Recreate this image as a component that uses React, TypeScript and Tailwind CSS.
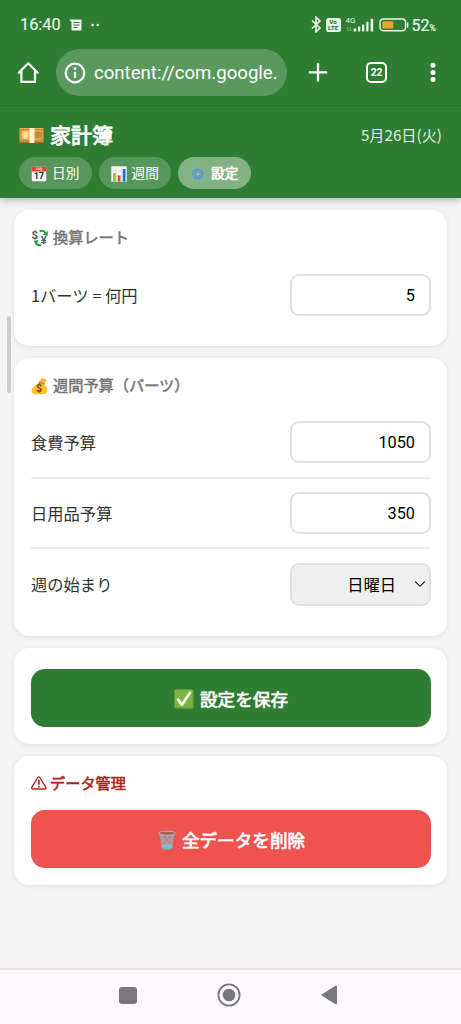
import type { ReactNode } from "react";

const jp = "font-['Noto_Sans_CJK_JP',sans-serif]";

function StatusBar() {
  return (
    <div className="flex h-[49px] items-center pl-[20px] pr-[25px] font-[Roboto,sans-serif] text-[#e9f6e9]">
      <span className="mt-[2px] w-[41px] whitespace-nowrap text-[16.3px] leading-none [-webkit-text-stroke:0.15px]">16:40</span>
      <svg className="ml-[8px]" width="14" height="12" viewBox="0 0 14 12">
        <path d="M0 .5h11.5a1 1 0 0 1 1 1v9a1 1 0 0 1-1 1h-8a1 1 0 0 1-1-1V3Z" fill="currentColor" />
        <path d="M4.5 3.5h6M4.5 6h6M4.5 8.5h4" stroke="#2e7d32" strokeWidth="1" />
      </svg>
      <svg className="ml-[8px]" width="9" height="4" viewBox="0 0 9 4">
        <circle cx="1.5" cy="2" r="1.3" fill="currentColor" />
        <circle cx="6.7" cy="2" r="1.3" fill="currentColor" />
      </svg>

      <div className="ml-auto flex items-center">
        <svg width="11" height="17" viewBox="0 0 11 17" fill="none" stroke="currentColor" strokeWidth="1.6">
          <path d="m1 4.5 8 7.5-4 3.8V1.2l4 3.7L1 12.5" />
        </svg>
        <span className="ml-[4px] flex h-[14px] w-[15px] flex-col items-center justify-center rounded-[2.5px] bg-[#e9f6e9] text-[6.2px] font-black leading-[6px] text-[#2e7d32]">
          <span>Vo</span>
          <span>LTE</span>
        </span>
        <div className="relative ml-[5px] h-[16px] w-[28px]">
          <span className="absolute left-[0px] top-[0px] text-[8px] leading-none">4G</span>
          <svg className="absolute inset-0" width="28" height="16" viewBox="0 0 28 16">
            <g fill="currentColor">
              <rect x="7.6" y="11.4" width="2.8" height="3" rx=".6" />
              <rect x="12" y="9.6" width="2.3" height="4.8" rx=".6" />
              <rect x="16" y="7.6" width="2.3" height="6.8" rx=".6" />
              <rect x="20.2" y="4.8" width="2.3" height="9.6" rx=".6" />
              <rect x="24.6" y="1.8" width="2.6" height="12.6" rx=".6" />
            </g>
            <path d="M1.8 14V10M.5 11.3 1.8 10M4.3 10v4l1.3-1.3" stroke="#8fbd91" strokeWidth=".8" fill="none" />
          </svg>
        </div>
        <svg className="ml-[5px]" width="30" height="14" viewBox="0 0 30 14">
          <rect x="1" y="1" width="25.5" height="11.8" rx="3.2" fill="none" stroke="currentColor" strokeWidth="1.4" />
          <rect x="3.3" y="3.2" width="11" height="7.4" rx="1.2" fill="#e8a72c" />
          <path d="M28.6 5v4" stroke="currentColor" strokeWidth="1.6" strokeLinecap="round" />
        </svg>
        <span className="ml-[3px] mt-[2px] flex items-baseline leading-none [-webkit-text-stroke:0.2px]">
          <span className="text-[16px]">52</span>
          <span className="text-[8.8px]">%</span>
        </span>
      </div>
    </div>
  );
}

function BrowserBar() {
  return (
    <div className="flex h-[57px] items-start border-b border-[#2a732d] font-[Roboto,sans-serif] text-white">
      <svg className="ml-[17px] mt-[12px]" width="22" height="23" viewBox="0 0 22 23" fill="none" stroke="currentColor" strokeWidth="2.2" strokeLinejoin="round" strokeLinecap="round">
        <path d="M1.8 11.8 11.2 2.2l9.4 9.6M4.4 10v10.9H18V10" />
      </svg>
      <div className="ml-[17px] flex h-[47px] w-[231px] items-center rounded-full bg-[#5a985d]">
        <svg className="ml-[8px]" width="22" height="22" viewBox="0 0 22 22">
          <circle cx="11" cy="11" r="9.3" fill="none" stroke="currentColor" strokeWidth="2.2" />
          <path d="M11 9.8v6" stroke="currentColor" strokeWidth="2.3" />
          <circle cx="11" cy="6.6" r="1.4" fill="currentColor" />
        </svg>
        <span className="ml-[8px] mt-[2px] whitespace-nowrap text-[18.6px] leading-none">content://com.google.</span>
      </div>
      <svg className="ml-[21px] mt-[13px]" width="20" height="20" viewBox="0 0 20 20" stroke="currentColor" strokeWidth="2.3">
        <path d="M.8 10.4h18.4M10 1.2v18.4" />
      </svg>
      <span className="ml-[38px] mt-[13px] flex h-[21px] w-[21px] items-center justify-center rounded-[5px] border-2 border-white text-[11.5px] font-bold leading-none">
        <span className="scale-x-90">22</span>
      </span>
      <svg className="ml-[42px] mt-[13px]" width="8" height="21" viewBox="0 0 8 21" fill="currentColor">
        <circle cx="4" cy="3.2" r="2.5" />
        <circle cx="4" cy="10.5" r="2.5" />
        <circle cx="4" cy="17.6" r="2.5" />
      </svg>
    </div>
  );
}

function YenIcon() {
  return (
    <svg width="25" height="17" viewBox="0 0 25 17">
      <rect x=".5" y="1" width="24" height="14" rx="1" fill="#e9b04e" />
      <path d="M.5 14.5h24v1.5H.5Z" fill="#9d7137" />
      <rect x="2" y="2.6" width="21" height="10.8" fill="none" stroke="#bd8130" strokeWidth=".9" />
      <circle cx="19" cy="8" r="3.7" fill="#c18c3d" />
      <circle cx="6.5" cy="8" r="4" fill="#f3c878" />
      <path d="m4.6 5 1.9 2.9L8.4 5M6.5 8v3.5M4.7 8.3h3.6M4.7 10h3.6" stroke="#fff3d5" strokeWidth=".9" fill="none" />
      <path d="M10.5 1h5v15h-5Z" fill="#fff0c6" />
    </svg>
  );
}

function CalendarIcon() {
  return (
    <svg width="16" height="16" viewBox="0 0 16 16">
      <rect x=".8" y=".8" width="14.4" height="14.4" rx="1" fill="#f5f5f5" />
      <path d="M.8 1.8a1 1 0 0 1 1-1h12.4a1 1 0 0 1 1 1v3.7H.8Z" fill="#e04438" />
      <text x="8" y="4.3" textAnchor="middle" fontFamily="Roboto" fontSize="3.5" fontWeight="500" fill="#fff">July</text>
      <text x="8" y="13.4" textAnchor="middle" fontFamily="Roboto" fontSize="8.6" fontWeight="700" fill="#222">17</text>
    </svg>
  );
}

function ChartIcon() {
  return (
    <svg width="16" height="16" viewBox="0 0 16 16">
      <rect x=".3" y=".3" width="15.4" height="15.4" fill="#f7f7f5" />
      <path d="M5.3 0v16M10.5 0v16M0 5h16M0 10h16" stroke="#c8d0d1" strokeWidth=".5" />
      <rect x="2" y="7" width="2.8" height="8.5" fill="#8fbd45" />
      <rect x="6.7" y="9.5" width="2.8" height="6" fill="#df4339" />
      <rect x="11.7" y="3" width="2.8" height="12.5" fill="#1976d2" />
    </svg>
  );
}

function GearIcon() {
  return (
    <svg width="16" height="16" viewBox="0 0 16 16" fill="none">
      <circle cx="8" cy="8" r="6.6" stroke="#7fb0c0" strokeWidth="2" strokeDasharray="2.6 2.58" />
      <circle cx="8" cy="8" r="4.6" fill="#79a9b5" stroke="#5b9cc0" strokeWidth="2" />
      <circle cx="8" cy="8" r="2.2" fill="#9cc0ac" stroke="#5389a8" strokeWidth=".8" />
    </svg>
  );
}

function ExchangeIcon() {
  return (
    <svg width="18" height="18" viewBox="0 0 18 18" fill="none">
      <text x="0.5" y="9.8" fontFamily="Roboto" fontSize="11.5" fontWeight="700" fill="#455a60">$</text>
      <text x="9.7" y="15" fontFamily="Roboto" fontSize="11" fontWeight="700" fill="#455a60">¥</text>
      <path d="M8.5 2.4c3-1.4 5.4-.3 5.8 2" stroke="#24994e" strokeWidth="2" />
      <path d="M16.7 2v5l-5.2-1.4ZM2.6 11.4l5.1-.2-2.4 4.5Z" fill="#24994e" />
      <path d="M4.4 13.3c1 2.4 3 3.3 6 3" stroke="#24994e" strokeWidth="1.8" />
    </svg>
  );
}

function MoneyBagIcon() {
  return (
    <svg width="18" height="18" viewBox="0 0 18 18">
      <path d="m9 4 1-2.5 2 .6 2-1.6.3 2.2 1.7.8-3 2.5Z" fill="#f7b62c" />
      <path d="M9.2 4.7 13 6.4c3 3.6 4.3 7.7 2.6 9.5-1.8 1.8-11.9 2-14.1.3C-.6 14.2 1.8 9 6.2 7.2Z" fill="#fbc02d" />
      <path d="m8.3 4 5.6 2.1-.7 1.4-5.6-2Z" fill="#c98b20" />
      <text x="5.2" y="15" fontFamily="Roboto" fontSize="10" fontWeight="700" fill="#694b1b">$</text>
    </svg>
  );
}

function CheckIcon() {
  return (
    <svg width="20" height="20" viewBox="0 0 20 20">
      <rect x=".5" y=".5" width="19" height="19" rx="1.2" fill="#7cb342" />
      <path d="M1.5 18.5h17v-17" stroke="#689f38" fill="none" strokeWidth=".8" />
      <path d="m4.2 10.7 3.7 5.1L16 3.8" stroke="#fafff5" strokeWidth="2.8" strokeLinecap="round" strokeLinejoin="round" fill="none" />
    </svg>
  );
}

function TrashIcon() {
  return (
    <svg width="20" height="20" viewBox="0 0 20 20" fill="none">
      <path d="M2 3.5 4.7 18c2 2 8.6 2 10.6 0L18 3.5Z" fill="#bc8588" />
      <path d="M4.2 15.2c3.2-1.5 8.4-1.5 11.6 0l-.6 3c-2 1.7-8.4 1.7-10.4 0Z" fill="#79bdcc" />
      <path d="m3 5 11 12M7 4l9 9M11 4l6 5M17 5 6 17M13 4l-9 9M9 4 3 9M7 18 5 5m8 13 2-13" stroke="#a9acb1" strokeWidth=".8" />
      <ellipse cx="10" cy="3.2" rx="8.2" ry="2" fill="#a85d61" stroke="#a3acaf" strokeWidth="1.2" />
      <path d="M4.7 17.8c2 2 8.6 2 10.6 0" stroke="#88999f" strokeWidth="1" />
    </svg>
  );
}

function WarningIcon() {
  return (
    <svg width="16" height="14" viewBox="0 0 16 14" fill="none" stroke="currentColor">
      <path d="M6.8 1.5.9 11.1c-.5.9 0 1.9 1 1.9h11.8c1 0 1.5-1 1-1.9L8.9 1.5c-.5-.9-1.6-.9-2.1 0Z" strokeWidth="1.4" />
      <path d="M7.85 3.8v5" strokeWidth="1.7" />
      <path d="M7.85 9.9v1.6" strokeWidth="1.7" />
    </svg>
  );
}

function Tab({ icon, label, active }: { icon: ReactNode; label: string; active?: boolean }) {
  return (
    <button
      className={`flex h-[32px] w-[72.5px] items-center justify-center gap-[5px] rounded-full text-[13.7px] leading-none text-white ${
        active ? "bg-[#82b184] [-webkit-text-stroke:0.6px]" : "bg-[#58975b]"
      }`}
    >
      <span className="mt-[1px]">{icon}</span>
      <span className="whitespace-nowrap">{label}</span>
    </button>
  );
}

function Card({ children, className }: { children: ReactNode; className: string }) {
  return (
    <section className={`rounded-[15px] bg-white pl-[17px] pr-[16px] shadow-[0_1px_5px_rgba(0,0,0,0.09)] ${className}`}>
      {children}
    </section>
  );
}

function CardTitle({ icon, children }: { icon: ReactNode; children: ReactNode }) {
  return (
    <h2 className="flex h-[20px] items-center gap-[4px] text-[15.2px] leading-none text-[#757575]">
      {icon}
      <span className="mb-[3px] [-webkit-text-stroke:0.5px]">{children}</span>
    </h2>
  );
}

function NumberRow({ label, value }: { label: string; value: string }) {
  return (
    <div className="flex h-[42px] items-center justify-between text-[16.3px] text-[#333]">
      <label className="leading-none">{label}</label>
      <input
        readOnly
        value={value}
        className="h-[42px] w-[141px] rounded-[9px] border-2 border-[#e0e0e0] bg-white pr-[14px] text-right font-[Roboto,sans-serif] text-[16.3px] text-black outline-none"
      />
    </div>
  );
}

export default function App() {
  return (
    <div className={`flex h-[1024px] w-[461px] flex-col overflow-hidden bg-[#f4f4f4] ${jp}`}>
      <div className="shrink-0 bg-[#2e7d32] shadow-[0_2px_8px_rgba(0,0,0,0.26)]">
        <StatusBar />
        <BrowserBar />
        <header className="h-[92px] pl-[19px] pr-[19px] pt-[17px] text-white">
          <div className="flex h-[24px] items-center justify-between">
            <h1 className="flex items-center gap-[6px] text-[21px] leading-none">
              <YenIcon />
              <span className="mb-[1px] [-webkit-text-stroke:0.9px]">家計簿</span>
            </h1>
            <span className="text-[15.2px] leading-none text-[#e0eee0]">5月26日(火)</span>
          </div>
          <nav className="mt-[10px] flex gap-[7px]">
            <Tab icon={<CalendarIcon />} label="日別" />
            <Tab icon={<ChartIcon />} label="週間" />
            <Tab icon={<GearIcon />} label="設定" active />
          </nav>
        </header>
      </div>

      <main className="relative flex flex-1 flex-col gap-[12px] px-[14px] pt-[12px]">
        {/* scroll thumb */}
        <div className="absolute left-[7px] top-[118px] h-[77px] w-[4px] rounded-full bg-[#cdcdcd]" />

        <Card className="h-[136px] pt-[18px]">
          <CardTitle icon={<ExchangeIcon />}>換算レート</CardTitle>
          <div className="mt-[26px]">
            <NumberRow label="1バーツ = 何円" value="5" />
          </div>
        </Card>

        <Card className="h-[278px] pt-[18px]">
          <CardTitle icon={<MoneyBagIcon />}>週間予算（バーツ）</CardTitle>
          <div className="mt-[26px] border-b-2 border-[#ececec] pb-[14px]">
            <div className="-mt-[1px]">
              <NumberRow label="食費予算" value="1050" />
            </div>
          </div>
          <div className="mt-[13px] border-b-2 border-[#ececec] pb-[13px]">
            <NumberRow label="日用品予算" value="350" />
          </div>
          <div className="mt-[14px] flex h-[43px] items-center justify-between text-[16.3px] text-[#333]">
            <label className="leading-none">週の始まり</label>
            <button className="flex h-[43px] w-[141px] items-center justify-end rounded-[9px] border-2 border-[#e0e0e0] bg-[#efefef] pb-[1px] pr-[3px] text-[16.3px] leading-none text-black">
              日曜日
              <svg className="ml-[18px]" width="12" height="8" viewBox="0 0 12 8" fill="none" stroke="#222" strokeWidth="1.1">
                <path d="m1.2 1.5 4.8 4.8 4.8-4.8" />
              </svg>
            </button>
          </div>
        </Card>

        <Card className="h-[96px] pt-[21px]">
          <button className="flex h-[58px] w-full items-center justify-center gap-[6px] rounded-[14px] bg-[#2e7d32] pt-[2px] text-[17.6px] leading-none text-white [-webkit-text-stroke:0.7px]">
            <CheckIcon />
            設定を保存
          </button>
        </Card>

        <Card className="h-[129px] pt-[18px]">
          <h2 className="flex h-[20px] items-center gap-[3px] text-[15.2px] leading-none text-[#b3261e]">
            <span className="mb-[2px]">
              <WarningIcon />
            </span>
            <span className="mb-[3px] [-webkit-text-stroke:0.6px]">データ管理</span>
          </h2>
          <button className="mt-[16px] flex h-[58px] w-full items-center justify-center gap-[5px] rounded-[14px] bg-[#ef5350] pt-[2px] text-[17.6px] leading-none text-white [-webkit-text-stroke:0.7px]">
            <TrashIcon />
            全データを削除
          </button>
        </Card>
      </main>

      {/* system navigation */}
      <div className="flex h-[56px] shrink-0 items-center border-t-2 border-[#e7e5e8] bg-[#fcf8ff] pl-[119px] text-[#79797b]">
        <span className="mb-[4px] h-[17px] w-[18px] rounded-[3px] bg-[#79797b]" />
        <svg className="mb-[4px] ml-[80px]" width="24" height="24" viewBox="0 0 24 24">
          <circle cx="12" cy="12" r="10.6" fill="none" stroke="currentColor" strokeWidth="1.8" />
          <circle cx="12" cy="12" r="6.3" fill="currentColor" />
        </svg>
        <svg className="mb-[4px] ml-[80px]" width="17" height="20" viewBox="0 0 17 20">
          <path d="M1.5 10 15 1.5v17Z" fill="currentColor" stroke="currentColor" strokeWidth="2" strokeLinejoin="round" />
        </svg>
      </div>
    </div>
  );
}
